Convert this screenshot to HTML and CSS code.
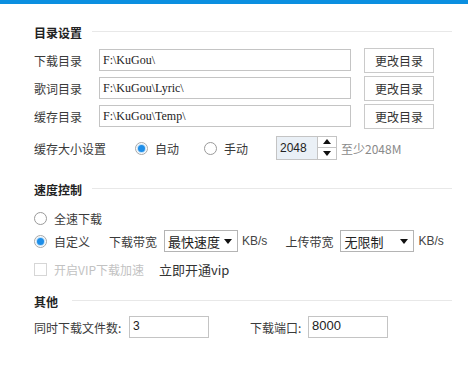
FILE: index.html
```html
<!DOCTYPE html>
<html lang="zh-CN">

<head>
    <meta charset="UTF-8">
    <meta name="viewport" content="width=device-width, initial-scale=1.0">
    <title>下载设置</title>
    <link rel="stylesheet" href="styles.css">
</head>

<body>
    <div class="top-bar"></div>

    <div class="panel">
        <!-- 目录设置 -->
        <div class="section-title title-dir"><span>目录设置</span></div>

        <div class="dir-row first">
            <span class="dir-label">下载目录</span>
            <div class="path-input">F:\KuGou\</div>
            <div class="btn">更改目录</div>
        </div>
        <div class="dir-row">
            <span class="dir-label">歌词目录</span>
            <div class="path-input">F:\KuGou\Lyric\</div>
            <div class="btn">更改目录</div>
        </div>
        <div class="dir-row">
            <span class="dir-label">缓存目录</span>
            <div class="path-input">F:\KuGou\Temp\</div>
            <div class="btn">更改目录</div>
        </div>

        <div class="cache-row">
            <span class="cache-label">缓存大小设置</span>
            <label class="option opt-auto"><span class="radio checked"></span>自动</label>
            <label class="option opt-manual"><span class="radio"></span>手动</label>
            <div class="spinner">
                <div class="spin-value">2048</div>
                <div class="spin-arrows">
                    <span class="arrow-up"></span>
                    <span class="arrow-down"></span>
                </div>
            </div>
            <span class="hint">至少2048M</span>
        </div>

        <!-- 速度控制 -->
        <div class="section-title title-speed"><span>速度控制</span></div>

        <div class="speed-row full">
            <label class="option"><span class="radio"></span>全速下载</label>
        </div>
        <div class="speed-row custom">
            <label class="option"><span class="radio checked"></span>自定义</label>
            <span class="bw-label down">下载带宽</span>
            <div class="select"><span>最快速度</span><span class="caret"></span></div>
            <span class="unit">KB/s</span>
            <span class="bw-label up">上传带宽</span>
            <div class="select"><span>无限制</span><span class="caret"></span></div>
            <span class="unit">KB/s</span>
        </div>
        <div class="vip-row">
            <label class="option disabled"><span class="checkbox"></span>开启VIP下载加速</label>
            <span class="vip-link">立即开通vip</span>
        </div>

        <!-- 其他 -->
        <div class="section-title title-other"><span>其他</span></div>

        <div class="other-row">
            <span class="other-label">同时下载文件数:</span>
            <div class="num-input files">3</div>
            <span class="other-label port">下载端口:</span>
            <div class="num-input port-input">8000</div>
        </div>
    </div>
</body>

</html>
```

FILE: styles.css
```css
body {
    margin: 0;
    background-color: #fff;
    font-family: "Noto Sans CJK SC", sans-serif;
    font-size: 12px;
    color: #3a3a3a;
    white-space: nowrap;
}

.top-bar {
    height: 4px;
    background-color: #0b8fe0;
}

.panel {
    width: 418px;
    padding-left: 34px;
}

.panel span,
.panel div,
.panel label {
    flex-shrink: 0;
}

/* section headings with trailing rule */
.section-title {
    display: flex;
    align-items: center;
    height: 16px;
    line-height: 16px;
    color: #222;
    font-weight: 600;
}

.section-title::after {
    content: "";
    flex: 1;
    border-top: 1px solid #e8e8e8;
    margin-left: 10px;
    margin-top: -3px;
}

.title-other::after {
    margin-left: 14px;
}

.title-dir {
    margin-top: 21px;
}

.title-speed {
    margin-top: 22px;
}

.title-other {
    margin-top: 17px;
}

/* directory rows */
.dir-row {
    display: flex;
    align-items: center;
    height: 25px;
    margin-top: 3px;
}

.dir-row.first {
    margin-top: 7px;
}

.dir-label {
    width: 65px;
}

.path-input {
    width: 247px;
    height: 20px;
    line-height: 20px;
    border: 1px solid #c4c4c4;
    padding-left: 3px;
    font-family: "Liberation Serif", serif;
    font-size: 12px;
    color: #222;
    margin-top: -1px;
}

.btn {
    width: 68px;
    height: 23px;
    line-height: 23px;
    margin-left: 13px;
    border: 1px solid #cacaca;
    text-align: center;
    color: #333;
}

/* cache size */
.cache-row {
    display: flex;
    align-items: center;
    height: 24px;
    margin-top: 7px;
}

.cache-label {
    width: 101px;
}

.option {
    display: flex;
    align-items: center;
}

.opt-auto {
    width: 69px;
}

.opt-manual {
    width: 72px;
}

.radio {
    width: 11px;
    height: 11px;
    border: 1px solid #9a9a9a;
    border-radius: 50%;
    margin-right: 7px;
    position: relative;
}

.radio.checked {
    border-color: #a8a8a8;
}

.radio.checked::after {
    content: "";
    position: absolute;
    left: 2px;
    top: 2px;
    width: 7px;
    height: 7px;
    border-radius: 50%;
    background-color: #1e8ee8;
    box-shadow: 0 0 1px 1px #b9dcf7;
}

.spinner {
    display: flex;
    height: 22px;
    border: 1px solid #c4c4c4;
    margin-top: -1px;
}

.spin-value {
    width: 37px;
    padding-left: 3px;
    line-height: 22px;
    background-color: #eaf0f6;
    font-family: "Liberation Sans", sans-serif;
    color: #222;
}

.spin-arrows {
    width: 18px;
    border-left: 1px solid #c4c4c4;
    display: flex;
    flex-direction: column;
}

.arrow-up,
.arrow-down {
    flex: 1;
    display: flex;
    align-items: center;
    justify-content: center;
}

.arrow-up {
    border-bottom: 1px solid #c4c4c4;
}

.arrow-up::before {
    content: "";
    border-left: 4px solid transparent;
    border-right: 4px solid transparent;
    border-bottom: 5px solid #111;
}

.arrow-down::before {
    content: "";
    border-left: 4px solid transparent;
    border-right: 4px solid transparent;
    border-top: 5px solid #111;
}

.hint {
    margin-left: 4px;
    color: #8a8a8a;
}

/* speed */
.speed-row.full {
    display: flex;
    height: 16px;
    margin-top: 12px;
}

.speed-row.custom {
    display: flex;
    align-items: center;
    height: 22px;
    margin-top: 4px;
}

.bw-label {
    margin-right: 7px;
}

.bw-label.down {
    margin-left: 19px;
}

.bw-label.up {
    margin-left: 18px;
}

.select {
    display: flex;
    align-items: center;
    justify-content: space-between;
    width: 64px;
    height: 20px;
    padding: 0 5px 0 3px;
    border: 1px solid #b4b4b4;
    font-size: 13px;
    color: #222;
}

.caret {
    border-left: 4px solid transparent;
    border-right: 4px solid transparent;
    border-top: 5px solid #111;
}

.unit {
    margin-left: 4px;
    font-family: "Liberation Sans", sans-serif;
    font-size: 12px;
    color: #444;
}

.vip-row {
    display: flex;
    align-items: center;
    height: 16px;
    margin-top: 9px;
}

.option.disabled {
    color: #c2c2c2;
}

.checkbox {
    width: 11px;
    height: 11px;
    border: 1px solid #d6d6d6;
    margin-right: 7px;
}

.vip-link {
    margin-left: 15px;
    font-size: 13px;
    color: #333;
}

/* other */
.other-row {
    display: flex;
    align-items: center;
    height: 22px;
    margin-top: 6px;
}

.other-label {
    width: 95px;
}

.other-label.port {
    width: 58px;
    margin-left: 41px;
}

.num-input {
    height: 20px;
    line-height: 18px;
    border: 1px solid #c4c4c4;
    padding-left: 3px;
    font-family: "Liberation Sans", sans-serif;
    color: #222;
}

.num-input.files {
    width: 75px;
}

.num-input.port-input {
    width: 75px;
    font-size: 13px;
}
```
